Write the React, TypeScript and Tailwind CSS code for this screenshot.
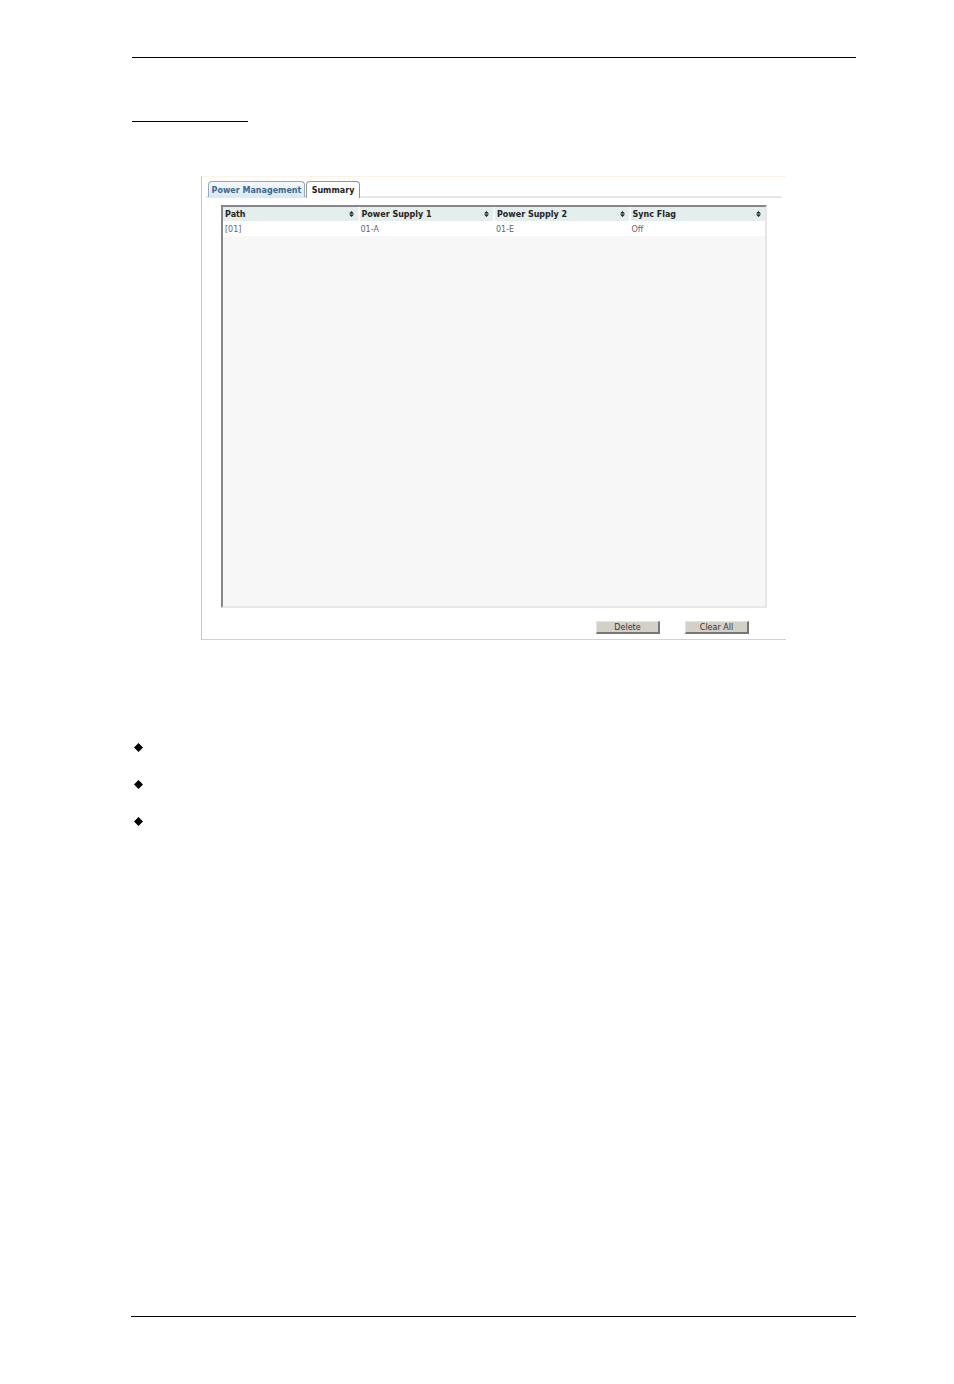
const columns = ['Path', 'Power Supply 1', 'Power Supply 2', 'Sync Flag'];
const rows = [['[01]', '01-A', '01-E', 'Off']];

function SortIcon() {
  return (
    <svg width="5" height="6" viewBox="0 0 5 6" className="shrink-0" aria-hidden="true">
      <path d="M2.5 0 L5 2.6 H0 Z M0 3.4 H5 L2.5 6 Z" fill="#1f2b2b" />
      <path d="M1 2.4 H4 V3.6 H1 Z" fill="#4c5858" />
    </svg>
  );
}

function Bullet() {
  return (
    <svg width="9" height="9" viewBox="0 0 9 9" className="block" aria-hidden="true">
      <path d="M4.5 0 L9 4.5 L4.5 9 L0 4.5 Z" fill="#000" />
    </svg>
  );
}

function PanelButton({ label }: { label: string }) {
  return (
    <button
      type="button"
      className="flex h-[13px] w-16 items-center justify-center border-t border-r-2 border-b-2 border-l border-t-[#e6e3de] border-r-[#777] border-b-[#777] border-l-[#e6e3de] bg-[#d4d0c8] pt-[2px] text-[8px] leading-none text-[#333]"
    >
      {label}
    </button>
  );
}

export default function App() {
  return (
    <div className="flex min-h-screen flex-col bg-white pt-[57px] pr-[98px] pb-[67px] pl-[132px] font-['DejaVu_Sans',Verdana,sans-serif]">
      <hr className="border-t border-black" />
      <hr className="mt-[63px] w-[116px] border-t border-black" />

      <main className="mt-[54px] mr-[70px] ml-[69px] border-t border-b border-l border-t-[#fdf3e2] border-b-[#d2d2d2] border-l-[#c4c4c4] pb-[5px]">
        <nav className="mr-1 ml-1 flex h-[21px] items-end gap-px border-b-2 border-[#e2e8ec] pl-[2px]">
          <button
            type="button"
            className="-mb-px h-4 w-[97px] rounded-t border border-b-0 border-[#96a9bb] bg-linear-to-b from-[#f5f9fc] to-[#d9e8f4] pt-[2px] text-center text-[8px] leading-none font-bold whitespace-nowrap text-[#3a678f]"
          >
            Power Management
          </button>
          <button
            type="button"
            className="-mb-[2px] h-[17px] w-[54px] rounded-t border border-b-0 border-[#8797a7] bg-white pt-px text-center text-[8px] leading-none font-bold text-[#222]"
          >
            Summary
          </button>
        </nav>

        <div className="mt-[7px] mr-[19px] ml-[19px] min-h-[403px] border-2 border-t-[#868686] border-r-[#e6e6e6] border-b-[#e8e8e8] border-l-[#868686] bg-[#f7f7f7]">
          <table className="w-full table-fixed border-collapse text-left text-[8px] leading-none">
            <thead>
              <tr className="h-[14px]">
                {columns.map((name) => (
                  <th
                    key={name}
                    scope="col"
                    className="border-r-2 border-[#f5f9f8] bg-[#e4eeec] p-0 pr-1 pl-[2px] font-bold text-[#222] last:border-r-0"
                  >
                    <div className="flex items-center justify-between">
                      <span className="pt-[2px]">{name}</span>
                      <SortIcon />
                    </div>
                  </th>
                ))}
              </tr>
            </thead>
            <tbody>
              {rows.map((row) => (
                <tr key={row[0]} className="h-[15px] bg-white text-[#666]">
                  {row.map((value, i) => (
                    <td key={columns[i]} className="p-0 pt-[2px] pl-[2px]">
                      {value}
                    </td>
                  ))}
                </tr>
              ))}
            </tbody>
          </table>
        </div>

        <div className="mt-[13px] mr-[37px] flex justify-end gap-[25px]">
          <PanelButton label="Delete" />
          <PanelButton label="Clear All" />
        </div>
      </main>

      <ul className="mt-[103px] flex flex-col gap-7 pl-[2px]">
        <li><Bullet /></li>
        <li><Bullet /></li>
        <li><Bullet /></li>
      </ul>

      <hr className="mt-auto -ml-px border-t border-black" />
    </div>
  );
}
